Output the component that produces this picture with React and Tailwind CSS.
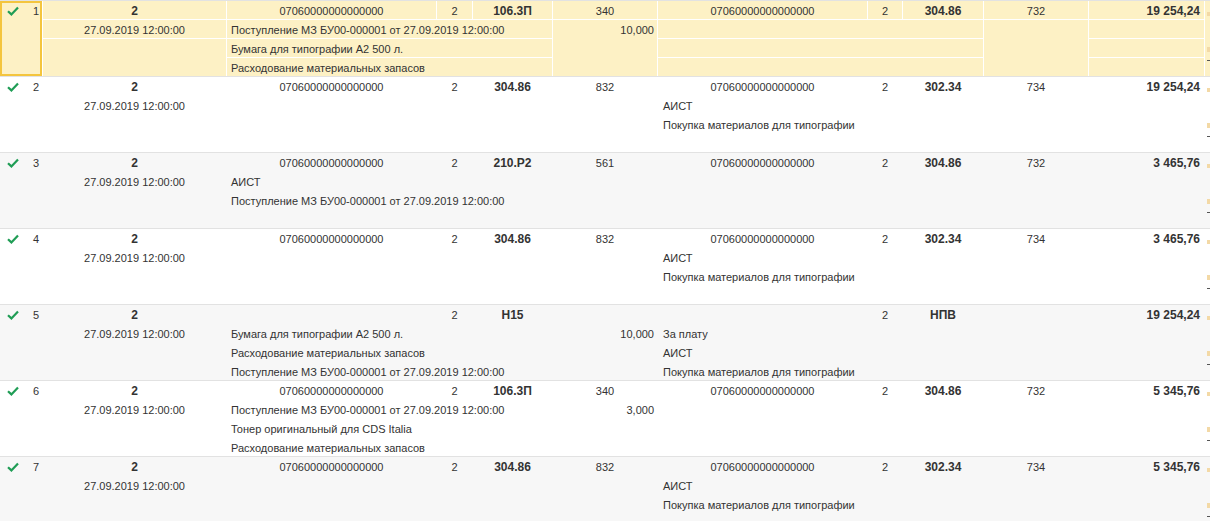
const CODE = "07060000000000000";
const POST = "Поступление МЗ БУ00-000001 от 27.09.2019 12:00:00";
const PAPER = "Бумага для типографии А2 500 л.";
const SPEND = "Расходование материальных запасов";
const BUY = "Покупка материалов для типографии";

const rows = [
  { n: 1, selected: true, code1: CODE, acc1: "106.3П", kps1: "340", left: [POST, PAPER, SPEND], qty: "10,000", code2: CODE, acc2: "304.86", kps2: "732", right: [], sum: "19 254,24" },
  { n: 2, code1: CODE, acc1: "304.86", kps1: "832", left: [], qty: "", code2: CODE, acc2: "302.34", kps2: "734", right: ["АИСТ", BUY], sum: "19 254,24" },
  { n: 3, code1: CODE, acc1: "210.Р2", kps1: "561", left: ["АИСТ", POST], qty: "", code2: CODE, acc2: "304.86", kps2: "732", right: [], sum: "3 465,76" },
  { n: 4, code1: CODE, acc1: "304.86", kps1: "832", left: [], qty: "", code2: CODE, acc2: "302.34", kps2: "734", right: ["АИСТ", BUY], sum: "3 465,76" },
  { n: 5, code1: "", acc1: "Н15", kps1: "", left: [PAPER, SPEND, POST], qty: "10,000", code2: "", acc2: "НПВ", kps2: "", right: ["За плату", "АИСТ", BUY], sum: "19 254,24" },
  { n: 6, code1: CODE, acc1: "106.3П", kps1: "340", left: [POST, "Тонер оригинальный для CDS Italia", SPEND], qty: "3,000", code2: CODE, acc2: "304.86", kps2: "732", right: [], sum: "5 345,76" },
  { n: 7, code1: CODE, acc1: "304.86", kps1: "832", left: [], qty: "", code2: CODE, acc2: "302.34", kps2: "734", right: ["АИСТ", BUY], sum: "5 345,76" },
];

function Check() {
  return (
    <svg width="12" height="10" viewBox="0 0 12 10" className="shrink-0">
      <path d="M1 5.2 L4.4 8.4 L11 1.4" fill="none" stroke="#1f9d55" strokeWidth="2.2" />
    </svg>
  );
}

function Row({ row, index }) {
  const cellBg = row.selected ? "bg-[#fdf1c5]" : "";
  const rowBg = row.selected ? "bg-white" : index % 2 === 0 ? "bg-[#f7f7f7]" : "bg-white";
  const c = `${cellBg} pt-px leading-[18px] whitespace-nowrap overflow-hidden`;
  const lines = [0, 1, 2];
  const lineRows = ["row-start-2", "row-start-3", "row-start-4"];

  return (
    <div className={`border-t border-[#e2e2e2] ${rowBg}`}>
      <div className="grid grid-cols-[42px_183px_209px_35px_79px_104px_209px_34px_80px_104px_115px_5px] grid-rows-[repeat(4,18px)] gap-px">
        {/* number column */}
        <div className={`${cellBg} row-span-4 col-start-1 row-start-1 border-2 ${row.selected ? "border-[#f4c53e]" : "border-transparent"}`}>
          <div className="flex h-4 items-center pl-[5px]">
            <Check />
            <span className="ml-[14px] mt-px text-[11px]">{row.n}</span>
          </div>
        </div>

        {/* line 1 */}
        <div className={`${c} col-start-2 row-start-1 text-center text-[12px] font-bold`}>2</div>
        <div className={`${c} col-start-3 row-start-1 text-center`}>{row.code1}</div>
        <div className={`${c} col-start-4 row-start-1 text-center`}>2</div>
        <div className={`${c} col-start-5 row-start-1 text-center text-[12px] font-bold`}>{row.acc1}</div>
        <div className={`${c} col-start-6 row-start-1 text-center`}>{row.kps1}</div>
        <div className={`${c} col-start-7 row-start-1 text-center`}>{row.code2}</div>
        <div className={`${c} col-start-8 row-start-1 text-center`}>2</div>
        <div className={`${c} col-start-9 row-start-1 text-center text-[12px] font-bold`}>{row.acc2}</div>
        <div className={`${c} col-start-10 row-start-1 text-center`}>{row.kps2}</div>
        <div className={`${c} col-start-11 row-start-1 pr-1 text-right text-[12px] font-bold`}>{row.sum}</div>

        {/* date */}
        <div className={`${c} col-start-2 row-start-2 text-center`}>27.09.2019 12:00:00</div>
        <div className={`${c} col-start-2 row-start-3 row-span-2`}></div>

        {/* left description lines */}
        {lines.map(i => (
          <div key={"l" + i} className={`${c} col-start-3 col-span-3 pl-1 ${lineRows[i]}`}>
            {row.left[i] || ""}
          </div>
        ))}

        {/* quantity */}
        <div className={`${c} col-start-6 row-start-2 row-span-3 pr-[3px] text-right`}>{row.qty}</div>

        {/* right description lines */}
        {lines.map(i => (
          <div key={"r" + i} className={`${c} col-start-7 col-span-3 pl-[5px] ${lineRows[i]}`}>
            {row.right[i] || ""}
          </div>
        ))}

        <div className={`${c} col-start-10 row-start-2 row-span-3`}></div>

        {lines.map(i => (
          <div key={"s" + i} className={`${c} col-start-11 ${lineRows[i]}`}></div>
        ))}

        {/* cut-off column at the right edge */}
        <div className={`${cellBg} col-start-12 row-start-1 row-span-4 flex flex-col pl-[2px]`}>
          <div className="mt-[11px] h-[4px] w-[3px] bg-[#f3d9a6]"></div>
          <div className="mt-[31px] h-[5px] w-[3px] bg-[#f3d9a6]"></div>
          <div className="mt-[8px] h-px w-[3px] bg-[#555]"></div>
        </div>
      </div>
    </div>
  );
}

export default function App() {
  return (
    <div className="w-[1210px] h-[521px] overflow-hidden bg-white text-[11px] text-[#333] font-['Liberation_Sans',Arial,sans-serif]">
      {rows.map((row, i) => (
        <Row key={row.n} row={row} index={i} />
      ))}
    </div>
  );
}
